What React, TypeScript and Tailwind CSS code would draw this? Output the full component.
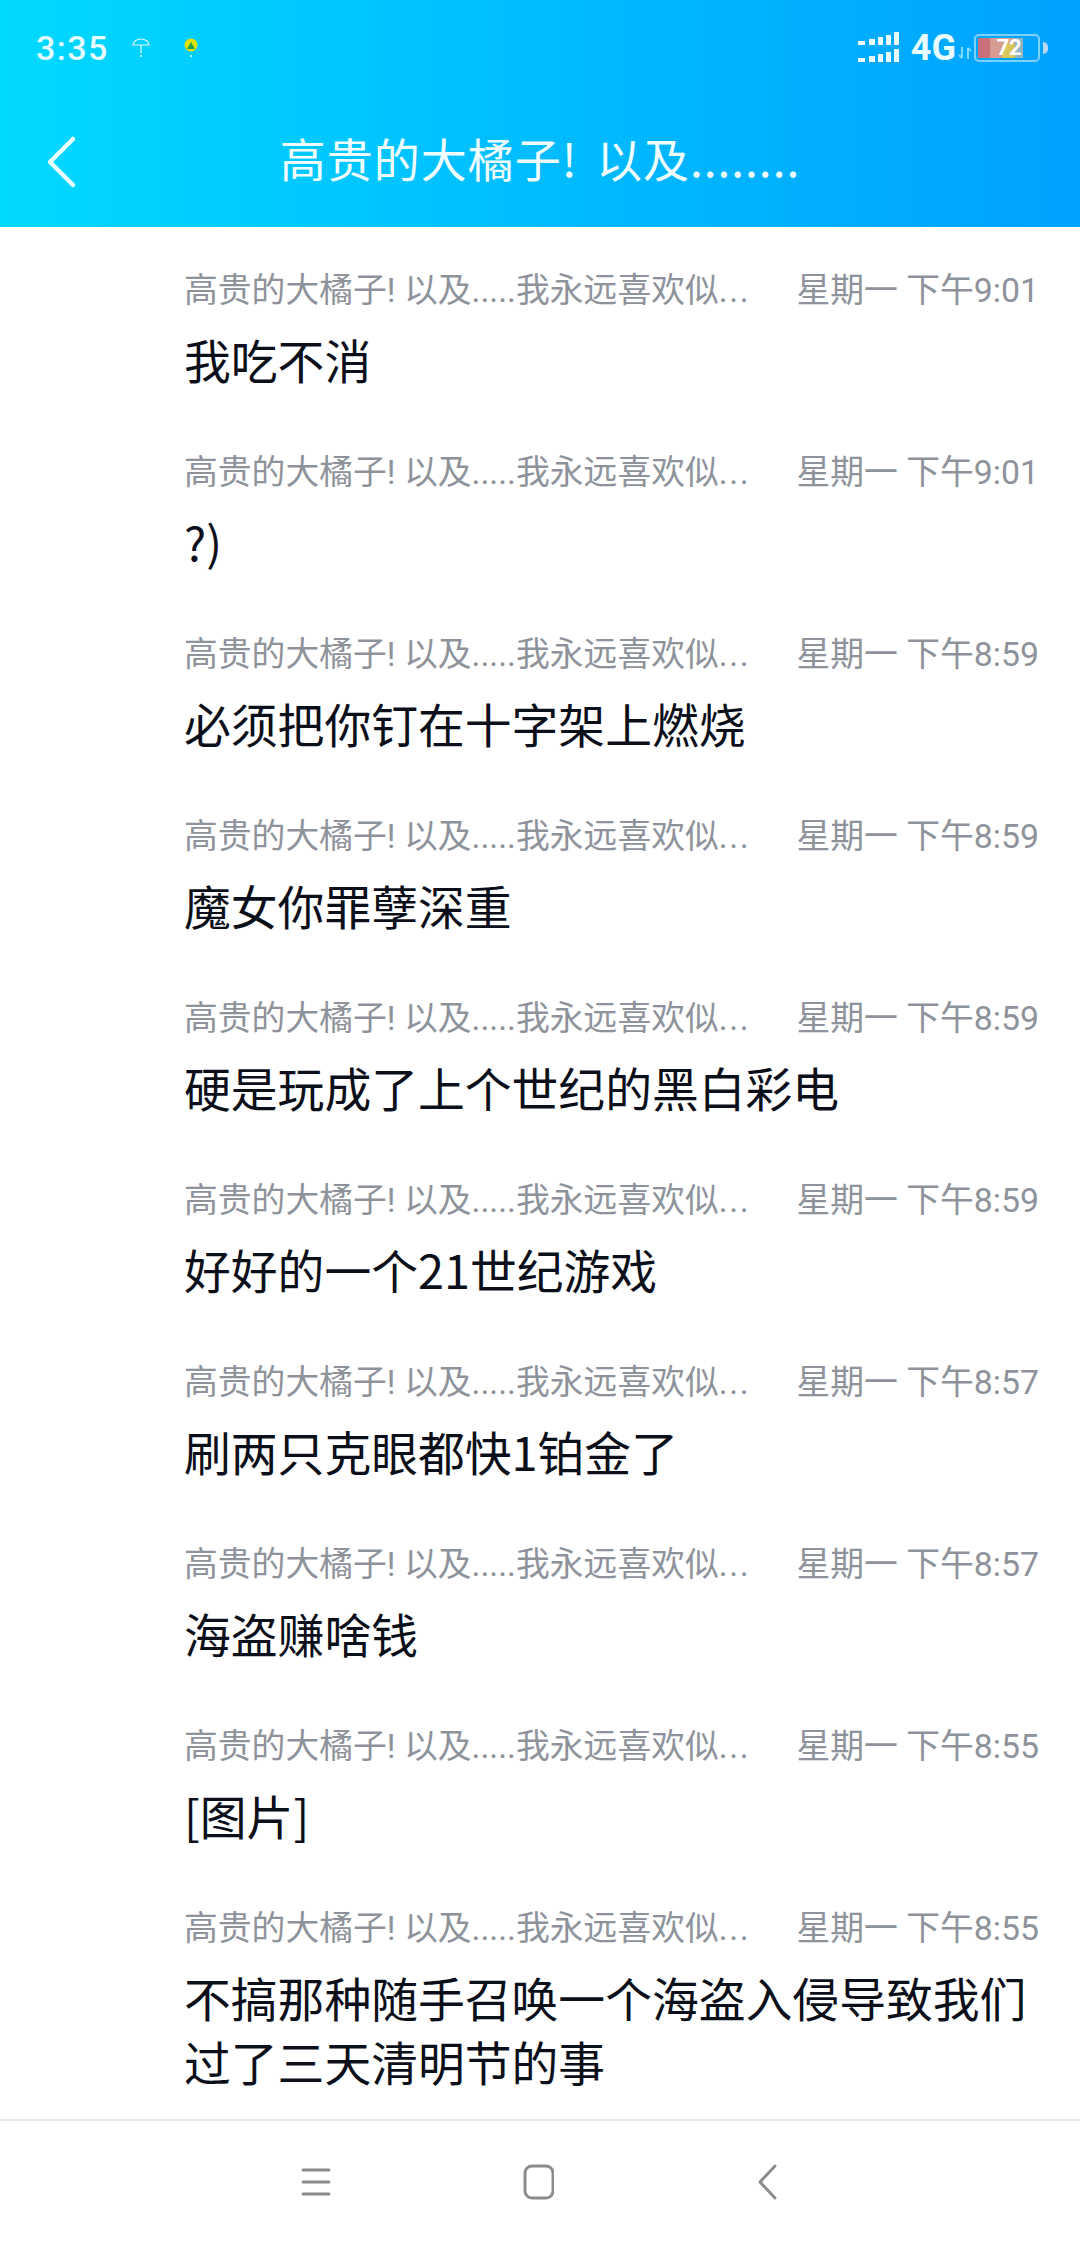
import React from 'react';

const NAME = '高贵的大橘子! 以及.....我永远喜欢似';

const messages = [
  { time: '星期一 下午9:01', text: '我吃不消' },
  { time: '星期一 下午9:01', text: '?)' },
  { time: '星期一 下午8:59', text: '必须把你钉在十字架上燃烧' },
  { time: '星期一 下午8:59', text: '魔女你罪孽深重' },
  { time: '星期一 下午8:59', text: '硬是玩成了上个世纪的黑白彩电' },
  { time: '星期一 下午8:59', text: '好好的一个21世纪游戏' },
  { time: '星期一 下午8:57', text: '刷两只克眼都快1铂金了' },
  { time: '星期一 下午8:57', text: '海盗赚啥钱' },
  { time: '星期一 下午8:55', text: '[图片]' },
  { time: '星期一 下午8:55', text: '不搞那种随手召唤一个海盗入侵导致我们过了三天清明节的事' },
];

function SignalBars() {
  return (
    <svg width="41" height="32" viewBox="0 0 41 32" fill="#e8fbff">
      <rect x="0" y="9" width="7" height="4" />
      <rect x="11" y="7" width="6" height="6" />
      <rect x="20" y="5" width="5" height="8" />
      <rect x="28" y="3" width="5" height="10" />
      <rect x="36" y="0" width="5" height="13" />
      <rect x="0" y="26" width="7" height="4" />
      <rect x="11" y="24" width="6" height="6" />
      <rect x="20" y="22" width="5" height="8" />
      <rect x="28" y="20" width="5" height="10" />
      <rect x="36" y="17" width="5" height="13" />
    </svg>
  );
}

function Battery() {
  return (
    <div className="flex items-center">
      <div className="relative w-[66px] h-[28px] rounded-[5px] border-2 border-[#7fd0ff] overflow-hidden">
        <div className="absolute left-[2px] top-[2px] bottom-[2px] w-[12px] bg-[#c96f7c]" />
        <div className="absolute left-[14px] top-[2px] bottom-[2px] w-[14px] bg-[#d69a90]" />
        <div className="absolute left-[28px] top-[2px] bottom-[2px] w-[12px] bg-[#d8a98c]" />
        <div className="absolute left-[26px] top-[8px] bottom-[2px] w-[13px] bg-[#d9c75c]" />
        <div className="absolute left-[39px] top-[2px] bottom-[2px] w-[8px] bg-[#8fb3c4]" />
        <span className="absolute inset-0 flex items-center justify-center text-[22px] leading-none font-bold text-white pl-[4px]">72</span>
      </div>
      <div className="ml-[3px] w-[5px] h-[12px] rounded-r-full bg-[#b9d8f5]" />
    </div>
  );
}

export default function App() {
  return (
    <div className="w-[1080px] h-[2248px] flex flex-col bg-white overflow-hidden font-['Roboto','Noto_Sans_CJK_SC',sans-serif]">
      <header className="h-[227px] shrink-0 bg-gradient-to-r from-[#00d9ff] via-[#00bcff] to-[#00a2ff] text-white">
        <div className="h-[95px] pl-[36px] pr-[32px] flex items-center justify-between">
          <div className="flex items-center">
            <span className="text-[34px] font-medium leading-none text-[#e6fbff] tracking-[1.5px]">3:35</span>
            <svg className="ml-[23px]" width="18" height="20" viewBox="0 0 18 20" fill="none" stroke="#e6fbff" strokeWidth="1.2">
              <path d="M1 7 A8 6 0 0 1 17 7 Z" />
              <path d="M9 7 V15" />
              <circle cx="9" cy="18" r="1" fill="#e6fbff" stroke="none" />
            </svg>
            <svg className="ml-[33px]" width="16" height="20" viewBox="0 0 16 20">
              <circle cx="8" cy="7" r="6.5" fill="#e4e000" />
              <path d="M4 11 L8 4 L12 11 Z" fill="#1fa34a" />
              <circle cx="8" cy="18" r="1" fill="#e6fbff" />
            </svg>
          </div>
          <div className="flex items-center">
            <SignalBars />
            <span className="ml-[12px] text-[36px] font-bold leading-none text-[#e8fbff]">4G</span>
            <svg className="ml-[2px] mr-[2px] mt-[10px]" width="14" height="14" viewBox="0 0 14 14" fill="none" stroke="#7fd6ff" strokeWidth="2">
              <path d="M4 1 V12 M1 9 L4 12" />
              <path d="M10 13 V2 M13 5 L10 2" />
            </svg>
            <Battery />
          </div>
        </div>
        <div className="relative h-[132px] flex items-start justify-center">
          <svg className="absolute left-[44px] top-[40px]" width="34" height="54" viewBox="0 0 34 54" fill="none" stroke="#eafcff" strokeWidth="4.5" strokeLinecap="round" strokeLinejoin="round">
            <path d="M29 4 L6 27 L29 50" />
          </svg>
          <h1 className="pt-[30px] text-[46px] leading-[64px] font-normal tracking-[1px] [word-spacing:7px] text-[#f0fdff] font-['Noto_Sans_CJK_SC',sans-serif] whitespace-nowrap">
            高贵的大橘子! 以及........
          </h1>
        </div>
      </header>

      <main className="flex-1 min-h-0 pl-[184px] pr-[41px] pt-[36px]">
        {messages.map((m, i) => (
          <div key={i} className="mb-[54px]">
            <div className="flex justify-between items-center h-[56px] text-[33.8px] leading-[56px] text-[#8e939b]">
              <span className="whitespace-nowrap">{NAME}<span className="tracking-[1.5px]">...</span></span>
              <span className="shrink-0 whitespace-nowrap">{m.time}</span>
            </div>
            <p className="text-[46.8px] leading-[64px] text-[#0b0f1a] mt-[8px] font-['Noto_Sans_CJK_SC',sans-serif]">{m.text}</p>
          </div>
        ))}
      </main>

      <nav className="h-[129px] shrink-0 border-t-2 border-[#e6e6e6] bg-white flex items-center pl-[301px] pb-[6px]">
        <svg width="30" height="30" viewBox="0 0 30 30" stroke="#8c8c8c" strokeWidth="3" strokeLinecap="round">
          <path d="M2 3 H28 M2 15 H28 M2 27 H28" />
        </svg>
        <svg className="ml-[191px]" width="32" height="36" viewBox="0 0 32 36" fill="none" stroke="#8c8c8c" strokeWidth="3">
          <rect x="3" y="2" width="28" height="32" rx="7" />
        </svg>
        <svg className="ml-[204px]" width="20" height="36" viewBox="0 0 20 36" fill="none" stroke="#8c8c8c" strokeWidth="3" strokeLinecap="round" strokeLinejoin="round">
          <path d="M17 2 L2 18 L17 34" />
        </svg>
      </nav>
    </div>
  );
}
